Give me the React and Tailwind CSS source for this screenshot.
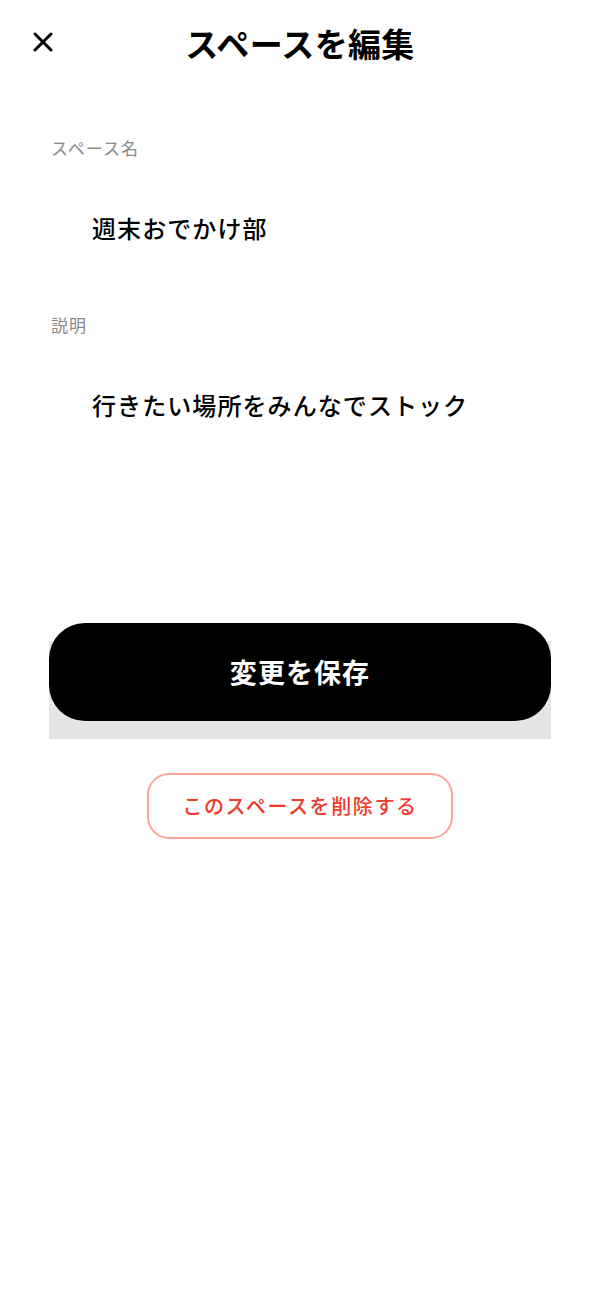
const font = { fontFamily: '"Noto Sans CJK JP", "Noto Sans", sans-serif' };

const Field = ({ label, value }) => (
    <div className="flex flex-col px-[2px]">
        <span className="text-[17px] leading-[24px] tracking-[0.06em] text-[#8a8a8a]">{label}</span>
        <span className="mt-[50px] pl-[41px] text-[24px] leading-[36px] tracking-[0.045em] font-medium text-black">
            {value}
        </span>
    </div>
);

export default function App() {
    return (
        <div className="w-[600px] h-[1300px] bg-white" style={font}>
            {/* Header */}
            <header className="relative h-[88px] flex items-center justify-center">
                <button className="absolute left-[31px] top-[30px] p-[2px]">
                    <svg width="20" height="20" viewBox="0 0 20 20" fill="none" stroke="black" strokeWidth="3" strokeLinecap="round">
                        <path d="M2 2L18 18M18 2L2 18" />
                    </svg>
                </button>
                <h1 className="text-[33px] font-bold text-black tracking-[0.01em]">スペースを編集</h1>
            </header>

            <div className="px-[49px] pt-[48px] flex flex-col">
                <Field label="スペース名" value="週末おでかけ部" />
                <div className="mt-[67px]">
                    <Field label="説明" value="行きたい場所をみんなでストック" />
                </div>

                {/* Save */}
                <div className="mt-[218px] bg-[#e5e5e5] flex flex-col">
                    <button className="-mt-[18px] mb-[18px] h-[98px] rounded-[36px] bg-black text-white text-[27px] font-bold tracking-[0.04em]">
                        変更を保存
                    </button>
                </div>

                {/* Delete */}
                <div className="mt-[34px] flex justify-center">
                    <button className="w-[306px] h-[66px] rounded-[22px] border-2 border-[#ffa39a] text-[#f0392b] text-[20px] font-medium tracking-[0.08em]">
                        このスペースを削除する
                    </button>
                </div>
            </div>
        </div>
    );
}
